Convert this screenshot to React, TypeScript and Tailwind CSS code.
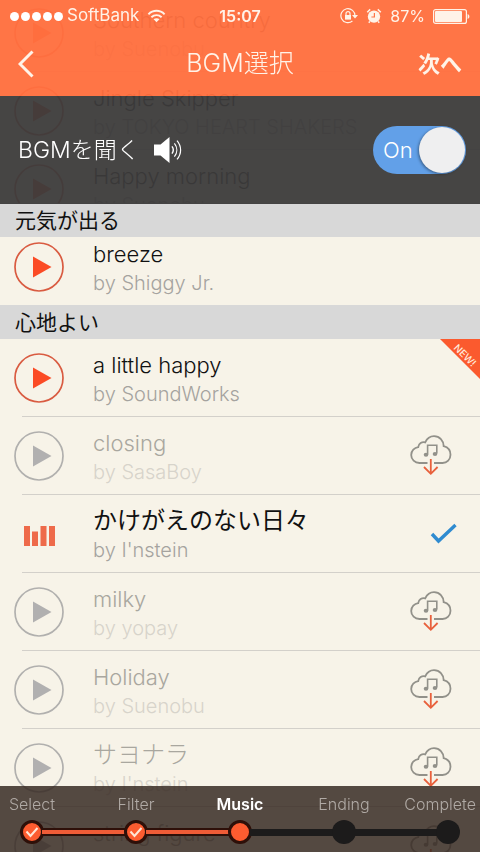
import { useState } from 'react'
import clsx from 'clsx'

type TrackStatus = 'ready' | 'remote' | 'playing'

interface Track {
  title: string
  artist: string
  status: TrackStatus
  isNew?: boolean
}

interface Group {
  name: string
  tracks: Track[]
}

const GROUPS: Group[] = [
  {
    name: '元気が出る',
    tracks: [
      { title: 'Southern country', artist: 'Suenobu', status: 'ready' },
      { title: 'Jingle Skipper', artist: 'TOKYO HEART SHAKERS', status: 'ready' },
      { title: 'Happy morning', artist: 'Suenobu', status: 'ready' },
      { title: 'breeze', artist: 'Shiggy Jr.', status: 'ready' },
    ],
  },
  {
    name: '心地よい',
    tracks: [
      { title: 'a little happy', artist: 'SoundWorks', status: 'ready', isNew: true },
      { title: 'closing', artist: 'SasaBoy', status: 'remote' },
      { title: 'かけがえのない日々', artist: "I'nstein", status: 'playing' },
      { title: 'milky', artist: 'yopay', status: 'remote' },
      { title: 'Holiday', artist: 'Suenobu', status: 'remote' },
      { title: 'サヨナラ', artist: "I'nstein", status: 'remote' },
      { title: 'string figure', artist: 'Suenobu', status: 'remote' },
    ],
  },
]

const STEPS = ['Select', 'Filter', 'Music', 'Ending', 'Complete']
const CURRENT_STEP = 2

// kana and kanji titles are set a little larger than latin ones
const isJapanese = (text: string) => /[\u3040-\u30ff\u4e00-\u9fff]/.test(text)

function WifiIcon() {
  return (
    <svg width="19" height="14" viewBox="0 0 20 14" fill="none" stroke="currentColor" strokeWidth="2">
      <path d="M1.5 5.2C6.3.3 13.7.3 18.5 5.2" />
      <path d="M4.6 8.3c3.1-3 7.7-3 10.8 0" />
      <path d="M10 13.6 6.9 10.5c1.8-1.6 4.4-1.6 6.2 0z" fill="currentColor" stroke="none" />
    </svg>
  )
}

function RotationLockIcon() {
  return (
    <svg width="18" height="16" viewBox="0 0 18 16" fill="none" stroke="currentColor">
      <path d="M12.4 13A7 7 0 1 1 14.9 8" strokeWidth="1.2" />
      <path d="M12 7h6l-3 3.6z" fill="currentColor" stroke="none" />
      <rect x="5" y="7" width="6" height="4.6" fill="currentColor" stroke="none" />
      <path d="M6 7V5.6a2 2 0 0 1 4 0V7" strokeWidth="1.2" />
    </svg>
  )
}

function AlarmIcon() {
  return (
    <svg width="16" height="16" viewBox="0 0 16 16" fill="none" stroke="currentColor">
      <circle cx="8" cy="8.6" r="6.2" fill="currentColor" stroke="none" />
      <path d="M1.2 4.2 4.2 1.4M14.8 4.2l-3-2.8M3.8 13.4l-1 1.4M12.2 13.4l1 1.4" strokeWidth="1.5" />
      <path d="M8.4 5v4H5.4" stroke="#ff7446" strokeWidth="1.2" />
    </svg>
  )
}

function BatteryIcon() {
  return (
    <svg width="37" height="15" viewBox="0 0 37 15">
      <rect x=".6" y=".6" width="32.8" height="13.8" rx="2" fill="none" stroke="currentColor" strokeWidth="1.2" />
      <rect x="2" y="2" width="27" height="11" rx="1" fill="currentColor" />
      <path d="M34.6 5c2.4 1 2.4 4 0 5z" fill="currentColor" />
    </svg>
  )
}

function SpeakerIcon() {
  return (
    <svg width="28" height="26" viewBox="0 0 28 26" fill="none" stroke="currentColor">
      <path d="M0 7.5h6.5L15.5 0v26L6.5 18.5H0z" fill="currentColor" stroke="none" />
      <path d="M18 9.4c1.6 2.2 1.6 5 0 7.2" strokeWidth="1.4" />
      <path d="M20.4 6.4c3.2 4 3.2 9.2 0 13.2" strokeWidth="1.2" />
      <path d="M23 3.6c4.8 5.6 4.8 13.2 0 18.8" strokeWidth="1.2" />
    </svg>
  )
}

function CloudDownloadIcon() {
  return (
    <svg width="42" height="42" viewBox="0 0 42 42" fill="none">
      <path
        d="M17.5 28H9.500C4.8 28 1.2 24.4 1.2 20c0-4.300 3.200-7.400 7-7.900C8.600 8.600 12 6.300 15.200 7.300 17 3.400 20 1.200 24 1.200c5.600 0 9.600 4.200 9.700 10C38 12.400 40.500 15.800 40.500 19.700c0 4.700-3.500 8.300-8 8.300H24"
        stroke="#92918a"
        strokeWidth="1.8"
      />
      <path d="M17.6 19.400V10.200h9.200v8.400" stroke="#92918a" strokeWidth="1.6" />
      <ellipse cx="16" cy="19.8" rx="2.3" ry="2" fill="#92918a" />
      <ellipse cx="25" cy="19" rx="2.3" ry="2" fill="#92918a" />
      <path d="M20.8 24v14.5M14 32l6.8 6.8 6.8-6.8" stroke="#e8603c" strokeWidth="1.8" />
    </svg>
  )
}

function PlayButton({ track }: { track: Track }) {
  const remote = track.status === 'remote'
  return (
    <button
      type="button"
      aria-label={`Play ${track.title}`}
      className={clsx('size-[50px] shrink-0', remote ? 'text-[#b1b0ae]' : 'text-[#d95b41]')}
    >
      {track.status === 'playing' ? (
        <svg width="50" height="50" viewBox="0 0 50 50" fill="#ee6a4a">
          <path d="M10 17h6v20h-6zM18 22.5h6v14.5h-6zM26.5 17h6v20h-6zM35 17h6v20h-6z" />
        </svg>
      ) : (
        <svg width="50" height="50" viewBox="0 0 50 50">
          <circle cx="25" cy="25" r="24" fill="none" stroke="currentColor" strokeWidth="1.7" />
          <path d="M19 14.5 37.5 25 19 35.5z" fill={remote ? '#b1b0b0' : '#fb4b25'} />
        </svg>
      )}
    </button>
  )
}

function TrackRow({ track }: { track: Track }) {
  const remote = track.status === 'remote'
  return (
    <li className="relative ml-[22px] flex h-[78px] items-center border-b border-[#d3d0ca] pr-7 last:h-[77px] last:border-b-0">
      <div className="-ml-2 flex flex-1 items-center gap-[29px]">
        <PlayButton track={track} />
        <div className="pt-0.5">
          <p
            className={clsx(
              'leading-[30px]',
              isJapanese(track.title) ? 'text-[24px]' : 'text-[22px]',
              remote ? 'text-[#a9a79f]' : 'text-[#111]',
              track.status === 'playing' && 'font-normal',
            )}
          >
            {track.title}
          </p>
          <p className={clsx('text-[20px] leading-7', remote ? 'text-[#d7d4cb]' : 'text-[#a5a39f]')}>
            by {track.artist}
          </p>
        </div>
      </div>
      {remote && (
        <button type="button" aria-label={`Download ${track.title}`}>
          <CloudDownloadIcon />
        </button>
      )}
      {track.status === 'playing' && (
        <svg width="28" height="22" viewBox="0 0 28 22" fill="none" className="-mr-1.5">
          <path d="M2 11l6.5 7L25.5 2" stroke="#2f8bd0" strokeWidth="3.4" />
        </svg>
      )}
      {track.isNew && (
        <div className="absolute top-0 right-0 size-10 overflow-hidden">
          <div className="size-full bg-[#fb5a2e] [clip-path:polygon(0_0,100%_0,100%_100%)]" />
          <span className="absolute top-1 left-3 rotate-45 text-[10px] leading-6 font-medium text-[#ffe9dc]">NEW!</span>
        </div>
      )}
    </li>
  )
}

function StatusBar() {
  return (
    <div className="grid h-8 grid-cols-[1fr_auto_1fr] items-center px-[10px] text-[16px] font-normal text-[#fff3e8]">
      <div className="flex items-center">
        <div className="flex gap-[2px]">
          {[0, 1, 2, 3, 4].map((dot) => (
            <span key={dot} className="size-[9px] rounded-full bg-white" />
          ))}
        </div>
        <span className="mr-2 ml-1 text-[17px]">SoftBank</span>
        <WifiIcon />
      </div>
      <span className="font-semibold">15:07</span>
      <div className="flex items-center justify-end gap-2">
        <RotationLockIcon />
        <AlarmIcon />
        <span>87%</span>
        <BatteryIcon />
      </div>
    </div>
  )
}

function StepBar() {
  return (
    <footer className="absolute inset-x-0 bottom-0 z-20 h-[66px] overflow-hidden bg-[#372a23]/85">
      <ol className="-mx-5 grid grid-cols-5 pt-2">
        {STEPS.map((step, i) => {
          const reached = i <= CURRENT_STEP
          const last = i === STEPS.length - 1
          return (
            <li key={step}>
              <p
                className={clsx(
                  'text-[16px] leading-5',
                  last ? 'pr-6 text-right' : 'text-center',
                  i === CURRENT_STEP ? 'font-semibold text-white' : 'text-[#b0aaa5]',
                )}
              >
                {step}
              </p>
              <div className="mt-[6px] flex items-center">
                <span
                  className={clsx(
                    'flex-1',
                    i === 0 && 'invisible',
                    reached ? 'h-2 border-y-2 border-[#2e1009] bg-[#ef5c37]' : 'h-[7px] bg-[#1c1b1b]',
                  )}
                />
                <span
                  className={clsx(
                    '-mx-0.5 flex size-6 items-center justify-center rounded-full',
                    reached ? 'border-[3px] border-[#2e1009] bg-[#fd5c30]' : 'bg-[#1c1b1b]',
                  )}
                >
                  {i < CURRENT_STEP && (
                    <svg width="14" height="12" viewBox="0 0 14 12" fill="none">
                      <path d="M1.5 5.5l4 4.5L12.5 2" stroke="#ffe6d6" strokeWidth="2" />
                    </svg>
                  )}
                </span>
                <span
                  className={clsx(
                    'flex-1',
                    last && 'invisible',
                    i < CURRENT_STEP ? 'h-2 border-y-2 border-[#2e1009] bg-[#ef5c37]' : 'h-[7px] bg-[#1c1b1b]',
                  )}
                />
              </div>
            </li>
          )
        })}
      </ol>
    </footer>
  )
}

export default function App() {
  const [listen, setListen] = useState(true)

  return (
    <div className="relative h-screen overflow-hidden bg-[#f7f3e8] font-['Inter','Noto_Sans_CJK_JP',sans-serif] font-light">
      <header className="absolute inset-x-0 top-0 z-20">
        <div className="h-24 bg-[#ff6f40]/96">
          <StatusBar />
          <nav className="grid h-16 grid-cols-[1fr_auto_1fr] items-center px-[18px] text-[#fff3e8]">
            <button type="button" aria-label="Back" className="justify-self-start">
              <svg width="16" height="28" viewBox="0 0 16 28" fill="none" stroke="currentColor" strokeWidth="3">
                <path d="M14.5 1.5 2 14l12.5 12.5" />
              </svg>
            </button>
            <h1 className="text-[25px]">BGM選択</h1>
            <button type="button" className="justify-self-end text-[22px] font-bold">次へ</button>
          </nav>
        </div>
        <div className="flex h-[108px] items-center justify-between bg-[#3c3b3b]/95 pr-[14px] pl-[18px] text-white">
          <label htmlFor="listen" className="flex items-center gap-[14px] text-[23px]">
            BGMを聞く
            <SpeakerIcon />
          </label>
          <label className="relative flex h-12 w-[93px] items-center rounded-full bg-[#62a0e8] pl-[10px]">
            <input
              id="listen"
              type="checkbox"
              role="switch"
              checked={listen}
              onChange={(e) => setListen(e.target.checked)}
              className="peer sr-only"
            />
            <span className="text-[22px] peer-not-checked:ml-auto peer-not-checked:pr-[10px]">{listen ? 'On' : 'Off'}</span>
            <span className="absolute top-px right-px size-[46px] rounded-full bg-[#efeff0] shadow-[-1px_1px_3px_rgba(0,0,0,0.4)] peer-not-checked:right-auto peer-not-checked:left-px" />
          </label>
        </div>
      </header>

      <main className="-mt-10">
        {GROUPS.map((group) => (
          <section key={group.name}>
            <h2 className="sticky top-[203px] z-10 h-[34px] bg-[#d8d8d8] pl-[15px] text-[21px] leading-[35px] font-normal text-[#111]">
              {group.name}
            </h2>
            <ul>
              {group.tracks.map((track) => (
                <TrackRow key={track.title} track={track} />
              ))}
            </ul>
          </section>
        ))}
      </main>

      <StepBar />
    </div>
  )
}
